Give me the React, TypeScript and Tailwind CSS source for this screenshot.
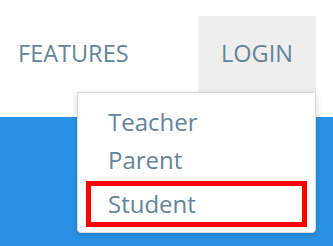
import React from "react";

export default function App() {
  return (
    <div
      className="relative w-[333px] h-[246px] overflow-hidden bg-white flex flex-col"
      style={{ fontFamily: '"Open Sans", "Noto Sans", sans-serif' }}
    >
      <header className="h-[117px] shrink-0 bg-white">
        <nav className="flex items-start pt-[16px] pl-[18px] h-full">
          <div className="w-[180px] pt-[26px] text-[23.5px] leading-none text-[#64849a]">FEATURES</div>
          <div className="relative w-[118px] h-[101px] bg-[#eeeeee] pt-[26px] flex justify-center text-[23.5px] leading-none text-[#64849a]">
            LOGIN
          </div>
        </nav>
      </header>
      <main className="flex-1 bg-[#2a92e6]" />
      <div className="absolute left-[77px] top-[92px] w-[239px] h-[141px] bg-white border border-[#dcdcdc] rounded-b-[4px] shadow-[0_2px_6px_rgba(0,0,0,0.18)] pt-[10px] flex flex-col text-[24px] leading-none text-[#64849a]">
        <div className="h-[38px] flex items-center pl-[30px]">Teacher</div>
        <div className="h-[38px] flex items-center pl-[30px]">Parent</div>
        <div className="mx-[8px] mt-[2px] h-[46px] border-[5px] border-[#ff0000] flex items-center pl-[17px]">Student</div>
      </div>
    </div>
  );
}
